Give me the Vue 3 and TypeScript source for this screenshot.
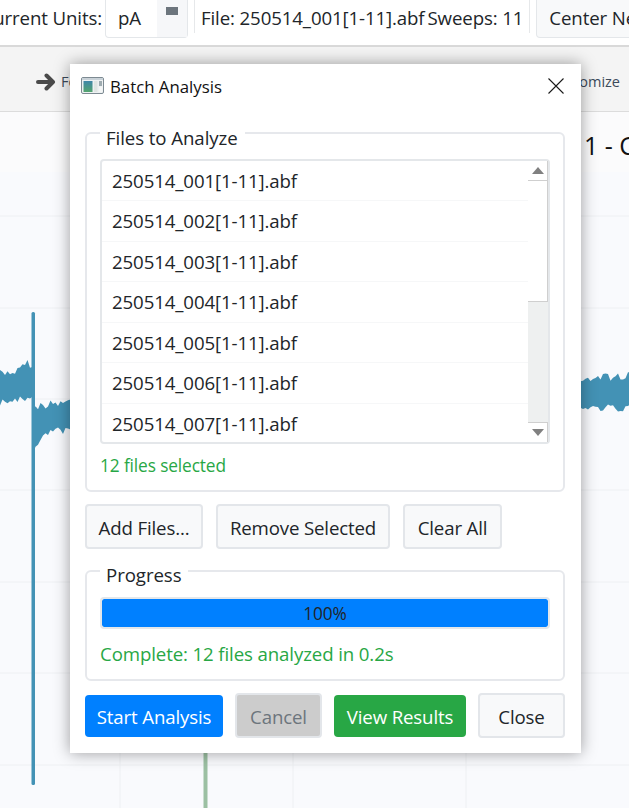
<script setup lang="ts">
const files = [1, 2, 3, 4, 5, 6, 7].map((n) => `250514_00${n}[1-11].abf`);
const gridY = [216, 308, 399, 490, 582, 673, 765];
const gridX = [120, 293, 466];

// noisy band for the trace, seeded so it stays the same on every load
let seed = 7;
const rnd = () => {
  seed = (seed * 16807) % 2147483647;
  return seed / 2147483647;
};
type Pt = [number, number];
const lerp = (pts: Pt[], x: number) => {
  for (let i = 1; i < pts.length; i++) {
    if (x <= pts[i][0]) {
      const t = (x - pts[i - 1][0]) / (pts[i][0] - pts[i - 1][0]);
      return pts[i - 1][1] + (pts[i][1] - pts[i - 1][1]) * t;
    }
  }
  return pts[pts.length - 1][1];
};
const band = (x0: number, x1: number, top: Pt[], bottom: Pt[]) => {
  const up: string[] = [];
  const down: string[] = [];
  for (let x = x0; x <= x1; x += 2.5) {
    up.push(`${x.toFixed(1)},${(lerp(top, x) + rnd() * 8 - 4).toFixed(1)}`);
    down.unshift(`${x.toFixed(1)},${(lerp(bottom, x) + rnd() * 8 - 4).toFixed(1)}`);
  }
  return up.concat(down).join(" ");
};
const traces = [
  band(0, 33, [[0, 374], [16, 371], [24, 361], [33, 366]], [[0, 402], [20, 400], [33, 396]]),
  band(33, 73, [[33, 408], [40, 406], [73, 400]], [[33, 450], [38, 446], [46, 432], [73, 430]]),
  band(578, 631, [[578, 378], [631, 376]], [[578, 408], [631, 408]]),
];
</script>

<template>
  <div class="app">
    <header class="topbar">
      <span class="units-label"><span>Current Units:</span></span>
      <div class="combo">
        <span class="combo-value">pA</span>
        <span class="combo-arrow"><i></i></span>
      </div>
      <span class="sep"></span>
      <span class="info">File: 250514_001[1-11].abf</span>
      <span class="info">Sweeps: 11</span>
      <span class="sep"></span>
      <div class="center-btn">Center Nearest</div>
    </header>

    <div class="toolbar">
      <svg class="arrow" width="20" height="18" viewBox="0 0 20 18">
        <path d="M2 9h14M10.500 2.500 17 9l-6.500 6.500" stroke="#4a4a4a" stroke-width="4" stroke-linecap="round" stroke-linejoin="round" fill="none" />
      </svg>
      <span class="tool-text">Forward</span>
      <span class="tool-spacer"></span>
      <span class="tool-text">Customize</span>
    </div>

    <main class="plot">
      <div class="plot-title"><span>1 - Current Trace</span></div>
      <svg class="plot-lines" width="629" height="696" viewBox="0 112 629 696">
        <line v-for="y in gridY" :key="y" x1="0" x2="629" :y1="y" :y2="y" stroke="#eef0f3" />
        <line v-for="x in gridX" :key="x" :x1="x" :x2="x" y1="172" y2="808" stroke="#eef0f3" />
        <polygon v-for="(p, i) in traces" :key="i" :points="p" fill="#4392b5" />
        <rect x="31.500" y="312" width="3.500" height="473" rx="1.500" fill="#4392b5" />
        <rect x="203.500" y="740" width="4" height="68" fill="#9cc0a3" />
      </svg>
    </main>

    <section class="dialog">
      <div class="dialog-title">
        <svg class="win-icon" width="23" height="17" viewBox="0 0 23 17">
          <defs>
            <linearGradient id="ic" x1="0" y1="0" x2="0" y2="1">
              <stop offset="0" stop-color="#3f86a8" />
              <stop offset="1" stop-color="#54a56e" />
            </linearGradient>
          </defs>
          <rect x="0.500" y="0.500" width="22" height="16" rx="1.500" fill="#eef1f2" stroke="#7d8a92" />
          <rect x="1" y="1" width="21" height="2" fill="#c9d2d8" />
          <rect x="2.500" y="4" width="9" height="11" fill="url(#ic)" />
          <rect x="13" y="4" width="3.500" height="11" fill="#dfe5e3" />
          <rect x="18" y="4" width="3" height="5" fill="#9eabb0" />
          <rect x="18" y="10" width="3" height="5" fill="#f4f6f6" />
        </svg>
        <span class="dialog-name">Batch Analysis</span>
        <svg class="close-x" width="16" height="16" viewBox="0 0 16 16">
          <path d="M.5.500l15 15M15.500.500l-15 15" stroke="#1a1a1a" stroke-width="1.100" fill="none" />
        </svg>
      </div>

      <div class="group files-group">
        <span class="legend">Files to Analyze</span>
        <div class="file-list">
          <ul class="rows">
            <li v-for="f in files" :key="f">{{ f }}</li>
          </ul>
          <div class="scrollbar">
            <div class="sb-btn"><i class="tri up"></i></div>
            <div class="sb-thumb"></div>
            <div class="sb-track"></div>
            <div class="sb-btn down"><i class="tri dn"></i></div>
          </div>
        </div>
        <div class="status">12 files selected</div>
      </div>

      <div class="file-actions">
        <button class="btn add">Add Files...</button>
        <button class="btn remove">Remove Selected</button>
        <button class="btn clear">Clear All</button>
      </div>

      <div class="group progress-group">
        <span class="legend">Progress</span>
        <div class="progress">100%</div>
        <div class="status">Complete: 12 files analyzed in 0.2s</div>
      </div>

      <div class="dialog-actions">
        <button class="btn primary">Start Analysis</button>
        <button class="btn disabled">Cancel</button>
        <button class="btn success">View Results</button>
        <button class="btn close">Close</button>
      </div>
    </section>
  </div>
</template>

<style>
html,
body {
  margin: 0;
  background: #fff;
}
</style>

<style scoped>
.app {
  position: relative;
  width: 629px;
  height: 808px;
  overflow: hidden;
  display: flex;
  flex-direction: column;
  font-family: "Open Sans", "Noto Sans", sans-serif;
  color: #212529;
  background: #fff;
}

.topbar {
  height: 45px;
  flex: none;
  display: flex;
  align-items: flex-start;
  white-space: nowrap;
  font-size: 18.67px;
  letter-spacing: -0.12px;
}

.units-label {
  flex: none;
  width: 105px;
  box-sizing: border-box;
  display: flex;
  justify-content: flex-end;
  padding: 6px 3px 0 0;
  line-height: 24px;
  overflow: hidden;
}

.units-label span {
  flex: none;
}

.combo {
  flex: none;
  width: 83px;
  height: 38px;
  box-sizing: border-box;
  display: flex;
  border: 1px solid #e4e7ea;
  border-top: 0;
  border-radius: 0 0 4px 4px;
}

.combo-value {
  width: 51px;
  padding: 6px 0 0 12px;
  box-sizing: border-box;
  line-height: 24px;
}

.combo-arrow {
  flex: 1;
  background: #f6f7f9;
  display: flex;
  justify-content: center;
  padding-top: 7px;
}

.combo-arrow i {
  width: 12px;
  height: 8px;
  background: #6c757d;
}

.sep {
  width: 1px;
  height: 33px;
  flex: none;
  background: #e6e8ea;
  margin: 0 6px;
}

.info {
  padding-top: 6px;
  line-height: 24px;
  flex: none;
}

.info + .info {
  margin-left: 3px;
}

.center-btn {
  flex: none;
  width: 160px;
  height: 38px;
  box-sizing: border-box;
  padding: 6px 12px 0;
  line-height: 24px;
  background: #f8f9fa;
  border: 1px solid #e4e7ea;
  border-top: 0;
  border-radius: 0 0 4px 4px;
}

.toolbar {
  height: 67px;
  flex: none;
  box-sizing: border-box;
  border-top: 2px solid #d9d9d9;
  border-bottom: 1px solid #dcdcdc;
  background: #f4f4f4;
  display: flex;
  align-items: center;
  padding: 5px 9px 0 36px;
  font-size: 14.5px;
  color: #3c4a5a;
}

.arrow {
  flex: none;
  margin-right: 5px;
}

.tool-spacer {
  flex: 1;
}

.plot {
  flex: 1;
  position: relative;
  background: #f9fafd;
}

.plot-title {
  height: 60px;
  background: #fbfbfc;
  display: flex;
  padding: 16px 0 0 584px;
  box-sizing: border-box;
  font-size: 25px;
  line-height: 34px;
  color: #111;
  white-space: nowrap;
}

.plot-lines {
  position: absolute;
  left: 0;
  top: 0;
}

.dialog {
  position: absolute;
  left: 70px;
  top: 64px;
  width: 511px;
  height: 689px;
  box-sizing: border-box;
  padding: 0 16px 0 15px;
  background: #fff;
  box-shadow: 0 0 15px rgba(0, 0, 0, 0.38);
  display: flex;
  flex-direction: column;
}

.dialog-title {
  height: 46px;
  flex: none;
  display: flex;
  align-items: center;
  margin-bottom: 22px;
}

.win-icon {
  margin-left: -4px;
  margin-right: 6px;
  margin-top: -3px;
  flex: none;
}

.dialog-name {
  flex: 1;
  font-size: 16.8px;
  margin-top: -2px;
  color: #111;
}

.close-x {
  flex: none;
  margin-right: 1px;
  margin-top: -3px;
}

.group {
  position: relative;
  box-sizing: border-box;
  border: 2px solid #e6e8ec;
  border-radius: 6px;
  padding: 0 13px;
}

.legend {
  position: absolute;
  left: 13px;
  top: -8px;
  padding: 0 7px 0 6px;
  background: #fff;
  font-size: 18.67px;
  line-height: 24px;
  height: 17px;
  letter-spacing: -0.08px;
}

.files-group {
  height: 360px;
  padding-top: 25px;
}

.file-list {
  height: 285px;
  box-sizing: border-box;
  border: 2px solid #e4e7ea;
  border-radius: 4px;
  display: flex;
}

.rows {
  list-style: none;
  margin: -0.4px 0 0;
  padding: 0;
  flex: 1;
  overflow: hidden;
}

.rows li {
  height: 40.5px;
  box-sizing: border-box;
  border-bottom: 1px solid #f6f7f8;
  padding: 0 0 0 10px;
  line-height: 40px;
  font-size: 18.67px;
  letter-spacing: -0.12px;
  white-space: nowrap;
}

.scrollbar {
  width: 20px;
  flex: none;
  display: flex;
  flex-direction: column;
  background: #eef0f0;
}

.sb-btn {
  height: 20px;
  flex: none;
  box-sizing: border-box;
  background: #fff;
  border-bottom: 1px solid #cfcfcf;
  border-right: 1px solid #cfcfcf;
  display: flex;
  align-items: center;
  justify-content: center;
}

.sb-btn.down {
  border-top: 1px solid #cfcfcf;
  border-bottom: 0;
}

.sb-thumb {
  height: 121px;
  flex: none;
  box-sizing: border-box;
  background: #fff;
  border-right: 1px solid #cfcfcf;
  border-bottom: 1px solid #cfcfcf;
}

.sb-track {
  flex: 1;
}

.tri {
  width: 0;
  height: 0;
  border-left: 6px solid transparent;
  border-right: 6px solid transparent;
}

.tri.up {
  border-bottom: 7px solid #808080;
}

.tri.dn {
  border-top: 7px solid #808080;
}

.status {
  color: #28a745;
  line-height: 24px;
  font-size: 17.3px;
  letter-spacing: -0.12px;
}

.files-group .status {
  margin-top: 10px;
}

.progress-group .status {
  margin-top: 13px;
  font-size: 18.67px;
}

.file-actions {
  display: flex;
  flex: none;
  gap: 13px;
  margin-top: 12px;
}

.btn {
  font-family: inherit;
  font-size: 18.67px;
  letter-spacing: -0.15px;
  box-sizing: border-box;
  height: 45px;
  padding: 1px 0 0;
  border: 2px solid #e3e6ea;
  border-radius: 4px;
  background: #f8f9fa;
  color: #212529;
}

.add {
  width: 118px;
}

.remove {
  width: 174px;
}

.clear {
  width: 99px;
}

.progress-group {
  height: 111px;
  margin-top: 21px;
  padding-top: 25px;
}

.progress-group .legend {
  top: -9px;
}

.progress {
  height: 32px;
  box-sizing: border-box;
  border: 2px solid #e4e7ea;
  border-radius: 4px;
  background: #0080ff;
  background-clip: padding-box;
  text-align: center;
  line-height: 30px;
  font-size: 17.3px;
  letter-spacing: -0.12px;
  color: #212529;
}

.dialog-actions {
  display: flex;
  flex: none;
  align-items: center;
  gap: 12px;
  margin-top: 12px;
}

.primary {
  width: 138px;
  height: 42px;
  border: 0;
  background: #0080ff;
  color: #fff;
}

.disabled {
  width: 87px;
  background: #cccccc;
  color: #6c757d;
}

.success {
  width: 132px;
  height: 42px;
  border: 0;
  background: #28a745;
  color: #fff;
}

.close {
  width: 87px;
}
</style>
